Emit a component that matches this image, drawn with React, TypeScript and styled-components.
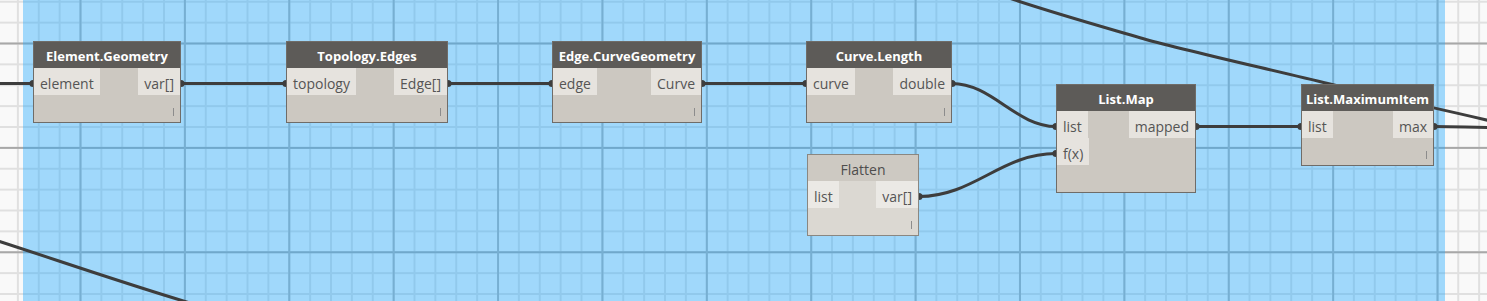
import React from "react";
import styled, { createGlobalStyle } from "styled-components";

const GlobalStyle = createGlobalStyle`
  html, body { margin: 0; padding: 0; background: #f9f9f9; overflow: hidden; }
  body { font-family: "Open Sans", "Noto Sans", sans-serif; }
`;

const Canvas = styled.div`
  position: relative;
  width: 1487px;
  height: 301px;
  overflow: hidden;
  background-color: #f9f9f9;
  background-image:
    linear-gradient(to right, #b4b4b4 1.5px, transparent 1.5px),
    linear-gradient(to bottom, #a8a8a8 1.5px, transparent 1.5px),
    linear-gradient(to right, #e0e0e0 2px, transparent 2px),
    linear-gradient(to bottom, #e0e0e0 2px, transparent 2px);
  background-size: 104.4px 100%, 100% 104.4px, 20.88px 100%, 100% 20.88px;
  background-position: 79.5px 0, 0 42.5px, 79.5px 0, 0 42.5px;
`;

const Selection = styled.div`
  position: absolute;
  left: 23px;
  top: 0;
  width: 1422px;
  height: 100%;
  background: rgba(27, 167, 255, 0.4);
`;

const WireLayer = styled.svg`
  position: absolute;
  left: 0;
  top: 0;
  width: 1487px;
  height: 301px;
  overflow: visible;
`;

const Wire = styled.path`
  fill: none;
  stroke: #3d3d3d;
  stroke-width: 3;
`;

const Nub = styled.circle`
  fill: #3d3d3d;
`;

type Variant = "selected" | "idle";

const NodeBox = styled.div<{ $x: number; $y: number; $w: number; $variant: Variant }>`
  position: absolute;
  left: ${(p) => p.$x}px;
  top: ${(p) => p.$y}px;
  width: ${(p) => p.$w}px;
  box-sizing: border-box;
  border: 1px solid ${(p) => (p.$variant === "selected" ? "#6f6c68" : "#8a8781")};
  background: ${(p) => (p.$variant === "selected" ? "#ccc8c1" : "#dbd8d2")};
  display: flex;
  flex-direction: column;
`;

const Header = styled.div<{ $variant: Variant }>`
  height: 26px;
  box-sizing: border-box;
  padding-top: 2px;
  display: flex;
  align-items: center;
  justify-content: center;
  white-space: nowrap;
  background: ${(p) => (p.$variant === "selected" ? "#5d5b58" : "#cdc9c2")};
  color: ${(p) => (p.$variant === "selected" ? "#ffffff" : "#4d4d4d")};
  font-size: ${(p) => (p.$variant === "selected" ? "13px" : "14px")};
  font-weight: ${(p) => (p.$variant === "selected" ? 700 : 400)};
`;

const PortRow = styled.div`
  height: 27px;
  display: flex;
  justify-content: space-between;
`;

const PortLabel = styled.div<{ $variant: Variant }>`
  height: 27px;
  box-sizing: border-box;
  padding: 4px 6px 0 6px;
  display: flex;
  align-items: center;
  font-size: 14px;
  color: #555555;
  white-space: nowrap;
  background: ${(p) => (p.$variant === "selected" ? "#e6e3de" : "#ebe9e5")};
`;

const Footer = styled.div`
  height: 27px;
  display: flex;
  justify-content: flex-end;
  align-items: flex-end;
`;

const Lacing = styled.div`
  width: 1px;
  height: 8px;
  margin: 0 6px 6px 0;
  background: #8c8c8c;
`;

type Row = { in?: string; out?: string };
type NodeDef = {
  title: string;
  x: number;
  y: number;
  w: number;
  rows: Row[];
  variant: Variant;
  lacing: boolean;
};

const nodes: NodeDef[] = [
  { title: "Element.Geometry", x: 33, y: 41, w: 148, rows: [{ in: "element", out: "var[]" }], variant: "selected", lacing: true },
  { title: "Topology.Edges", x: 286, y: 41, w: 162, rows: [{ in: "topology", out: "Edge[]" }], variant: "selected", lacing: true },
  { title: "Edge.CurveGeometry", x: 552, y: 41, w: 150, rows: [{ in: "edge", out: "Curve" }], variant: "selected", lacing: true },
  { title: "Curve.Length", x: 806, y: 41, w: 146, rows: [{ in: "curve", out: "double" }], variant: "selected", lacing: true },
  { title: "Flatten", x: 807, y: 154, w: 112, rows: [{ in: "list", out: "var[]" }], variant: "idle", lacing: true },
  { title: "List.Map", x: 1056, y: 84, w: 140, rows: [{ in: "list", out: "mapped" }, { in: "f(x)" }], variant: "selected", lacing: false },
  { title: "List.MaximumItem", x: 1301, y: 84, w: 133, rows: [{ in: "list", out: "max" }], variant: "selected", lacing: true },
];

const portY = (n: NodeDef, row: number) => n.y + 42.5 + row * 27;

const wires: string[] = [
  "M -5 83.5 L 33 83.5",
  "M 181 83.5 L 286 83.5",
  "M 448 83.5 L 552 83.5",
  "M 702 83.5 L 806 83.5",
  "M 952 83.5 C 992 83.5, 1016 126.5, 1056 126.5",
  "M 919 196.5 C 974 196.5, 1001 153.5, 1056 153.5",
  "M 1196 126.5 L 1301 126.5",
  "M 1434 126.5 C 1460 126.5, 1470 127.5, 1495 127.5",
  "M 1006 -3 C 1050 12, 1100 26, 1140 37.7 S 1260 67, 1330 84 S 1430 106.5, 1495 122",
  "M -5 240 C 60 261, 120 282, 190 303",
];

export default function App() {
  const nubs: { x: number; y: number }[] = [];
  nodes.forEach((n) => {
    n.rows.forEach((r, i) => {
      if (r.in && n.title !== "Flatten") nubs.push({ x: n.x, y: portY(n, i) });
      if (r.out) nubs.push({ x: n.x + n.w, y: portY(n, i) });
    });
  });

  return (
    <>
      <GlobalStyle />
      <Canvas>
        <Selection />
        <WireLayer viewBox="0 0 1487 301">
          {wires.map((d, i) => (
            <Wire key={i} d={d} />
          ))}
          {nubs.map((p, i) => (
            <Nub key={i} cx={p.x} cy={p.y} r={3.6} />
          ))}
        </WireLayer>
        {nodes.map((n) => (
          <NodeBox key={n.title} $x={n.x} $y={n.y} $w={n.w} $variant={n.variant}>
            <Header $variant={n.variant}>{n.title}</Header>
            {n.rows.map((r, i) => (
              <PortRow key={i}>
                {r.in ? <PortLabel $variant={n.variant}>{r.in}</PortLabel> : <span />}
                {r.out ? <PortLabel $variant={n.variant}>{r.out}</PortLabel> : <span />}
              </PortRow>
            ))}
            <Footer>{n.lacing && <Lacing />}</Footer>
          </NodeBox>
        ))}
      </Canvas>
    </>
  );
}
